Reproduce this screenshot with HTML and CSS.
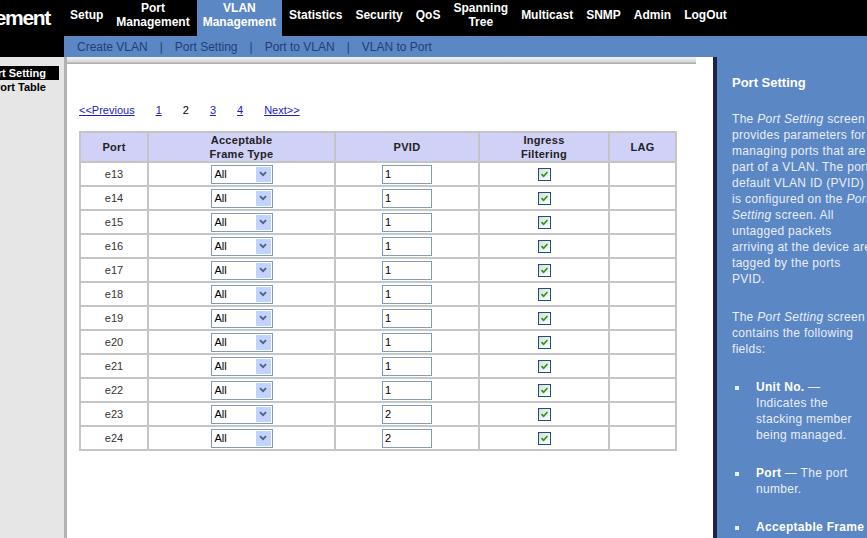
FILE: index.html
```html
<!DOCTYPE html>
<html lang="en">
<head>
    <meta charset="UTF-8">
    <title>VLAN Management - Port Setting</title>
    <link rel="stylesheet" href="styles.css">
</head>
<body>

    <div class="header">
        <div class="brand"><span>Management</span></div>
        <div class="menus">
            <div class="nav">
                <a>Setup</a>
                <a>Port<br>Management</a>
                <a class="active">VLAN<br>Management</a>
                <a>Statistics</a>
                <a>Security</a>
                <a>QoS</a>
                <a>Spanning<br>Tree</a>
                <a>Multicast</a>
                <a>SNMP</a>
                <a>Admin</a>
                <a>LogOut</a>
            </div>
            <div class="subnav">
                <a>Create VLAN</a><span class="sep">|</span>
                <a>Port Setting</a><span class="sep">|</span>
                <a>Port to VLAN</a><span class="sep">|</span>
                <a>VLAN to Port</a>
            </div>
        </div>
    </div>

    <div class="layout">
        <!-- Left menu -->
        <div class="side">
            <a class="current">Port Setting</a>
            <a>Port Table</a>
        </div>

        <!-- Main content -->
        <div class="main">
            <div class="topline"></div>
            <div class="content">
                <div class="pager">
                    <a href="#">&lt;&lt;Previous</a>
                    <a href="#">1</a>
                    <span>2</span>
                    <a href="#">3</a>
                    <a href="#">4</a>
                    <a href="#">Next&gt;&gt;</a>
                </div>

                <table class="grid">
                    <colgroup>
                        <col class="c-port"><col class="c-frame"><col class="c-pvid"><col class="c-ingress"><col class="c-lag">
                    </colgroup>
                    <thead>
                        <tr>
                            <th>Port</th>
                            <th>Acceptable<br>Frame Type</th>
                            <th>PVID</th>
                            <th>Ingress<br>Filtering</th>
                            <th>LAG</th>
                        </tr>
                    </thead>
                    <tbody>
                        <tr><td>e13</td><td><span class="sel"><span class="sel-val">All</span><span class="sel-btn"><svg width="8" height="6" viewBox="0 0 8 6"><path d="M1 1.2 L4 4.2 L7 1.2" fill="none" stroke="#4d6185" stroke-width="1.8"/></svg></span></span></td><td><input class="pvid" type="text" value="1"></td><td><span class="chk"><svg width="9" height="9" viewBox="0 0 9 9"><path d="M1.5 4.2 L3.5 6.3 L7.5 2" fill="none" stroke="#21a121" stroke-width="1.8"/></svg></span></td><td></td></tr>
                        <tr><td>e14</td><td><span class="sel"><span class="sel-val">All</span><span class="sel-btn"><svg width="8" height="6" viewBox="0 0 8 6"><path d="M1 1.2 L4 4.2 L7 1.2" fill="none" stroke="#4d6185" stroke-width="1.8"/></svg></span></span></td><td><input class="pvid" type="text" value="1"></td><td><span class="chk"><svg width="9" height="9" viewBox="0 0 9 9"><path d="M1.5 4.2 L3.5 6.3 L7.5 2" fill="none" stroke="#21a121" stroke-width="1.8"/></svg></span></td><td></td></tr>
                        <tr><td>e15</td><td><span class="sel"><span class="sel-val">All</span><span class="sel-btn"><svg width="8" height="6" viewBox="0 0 8 6"><path d="M1 1.2 L4 4.2 L7 1.2" fill="none" stroke="#4d6185" stroke-width="1.8"/></svg></span></span></td><td><input class="pvid" type="text" value="1"></td><td><span class="chk"><svg width="9" height="9" viewBox="0 0 9 9"><path d="M1.5 4.2 L3.5 6.3 L7.5 2" fill="none" stroke="#21a121" stroke-width="1.8"/></svg></span></td><td></td></tr>
                        <tr><td>e16</td><td><span class="sel"><span class="sel-val">All</span><span class="sel-btn"><svg width="8" height="6" viewBox="0 0 8 6"><path d="M1 1.2 L4 4.2 L7 1.2" fill="none" stroke="#4d6185" stroke-width="1.8"/></svg></span></span></td><td><input class="pvid" type="text" value="1"></td><td><span class="chk"><svg width="9" height="9" viewBox="0 0 9 9"><path d="M1.5 4.2 L3.5 6.3 L7.5 2" fill="none" stroke="#21a121" stroke-width="1.8"/></svg></span></td><td></td></tr>
                        <tr><td>e17</td><td><span class="sel"><span class="sel-val">All</span><span class="sel-btn"><svg width="8" height="6" viewBox="0 0 8 6"><path d="M1 1.2 L4 4.2 L7 1.2" fill="none" stroke="#4d6185" stroke-width="1.8"/></svg></span></span></td><td><input class="pvid" type="text" value="1"></td><td><span class="chk"><svg width="9" height="9" viewBox="0 0 9 9"><path d="M1.5 4.2 L3.5 6.3 L7.5 2" fill="none" stroke="#21a121" stroke-width="1.8"/></svg></span></td><td></td></tr>
                        <tr><td>e18</td><td><span class="sel"><span class="sel-val">All</span><span class="sel-btn"><svg width="8" height="6" viewBox="0 0 8 6"><path d="M1 1.2 L4 4.2 L7 1.2" fill="none" stroke="#4d6185" stroke-width="1.8"/></svg></span></span></td><td><input class="pvid" type="text" value="1"></td><td><span class="chk"><svg width="9" height="9" viewBox="0 0 9 9"><path d="M1.5 4.2 L3.5 6.3 L7.5 2" fill="none" stroke="#21a121" stroke-width="1.8"/></svg></span></td><td></td></tr>
                        <tr><td>e19</td><td><span class="sel"><span class="sel-val">All</span><span class="sel-btn"><svg width="8" height="6" viewBox="0 0 8 6"><path d="M1 1.2 L4 4.2 L7 1.2" fill="none" stroke="#4d6185" stroke-width="1.8"/></svg></span></span></td><td><input class="pvid" type="text" value="1"></td><td><span class="chk"><svg width="9" height="9" viewBox="0 0 9 9"><path d="M1.5 4.2 L3.5 6.3 L7.5 2" fill="none" stroke="#21a121" stroke-width="1.8"/></svg></span></td><td></td></tr>
                        <tr><td>e20</td><td><span class="sel"><span class="sel-val">All</span><span class="sel-btn"><svg width="8" height="6" viewBox="0 0 8 6"><path d="M1 1.2 L4 4.2 L7 1.2" fill="none" stroke="#4d6185" stroke-width="1.8"/></svg></span></span></td><td><input class="pvid" type="text" value="1"></td><td><span class="chk"><svg width="9" height="9" viewBox="0 0 9 9"><path d="M1.5 4.2 L3.5 6.3 L7.5 2" fill="none" stroke="#21a121" stroke-width="1.8"/></svg></span></td><td></td></tr>
                        <tr><td>e21</td><td><span class="sel"><span class="sel-val">All</span><span class="sel-btn"><svg width="8" height="6" viewBox="0 0 8 6"><path d="M1 1.2 L4 4.2 L7 1.2" fill="none" stroke="#4d6185" stroke-width="1.8"/></svg></span></span></td><td><input class="pvid" type="text" value="1"></td><td><span class="chk"><svg width="9" height="9" viewBox="0 0 9 9"><path d="M1.5 4.2 L3.5 6.3 L7.5 2" fill="none" stroke="#21a121" stroke-width="1.8"/></svg></span></td><td></td></tr>
                        <tr><td>e22</td><td><span class="sel"><span class="sel-val">All</span><span class="sel-btn"><svg width="8" height="6" viewBox="0 0 8 6"><path d="M1 1.2 L4 4.2 L7 1.2" fill="none" stroke="#4d6185" stroke-width="1.8"/></svg></span></span></td><td><input class="pvid" type="text" value="1"></td><td><span class="chk"><svg width="9" height="9" viewBox="0 0 9 9"><path d="M1.5 4.2 L3.5 6.3 L7.5 2" fill="none" stroke="#21a121" stroke-width="1.8"/></svg></span></td><td></td></tr>
                        <tr><td>e23</td><td><span class="sel"><span class="sel-val">All</span><span class="sel-btn"><svg width="8" height="6" viewBox="0 0 8 6"><path d="M1 1.2 L4 4.2 L7 1.2" fill="none" stroke="#4d6185" stroke-width="1.8"/></svg></span></span></td><td><input class="pvid" type="text" value="2"></td><td><span class="chk"><svg width="9" height="9" viewBox="0 0 9 9"><path d="M1.5 4.2 L3.5 6.3 L7.5 2" fill="none" stroke="#21a121" stroke-width="1.8"/></svg></span></td><td></td></tr>
                        <tr><td>e24</td><td><span class="sel"><span class="sel-val">All</span><span class="sel-btn"><svg width="8" height="6" viewBox="0 0 8 6"><path d="M1 1.2 L4 4.2 L7 1.2" fill="none" stroke="#4d6185" stroke-width="1.8"/></svg></span></span></td><td><input class="pvid" type="text" value="2"></td><td><span class="chk"><svg width="9" height="9" viewBox="0 0 9 9"><path d="M1.5 4.2 L3.5 6.3 L7.5 2" fill="none" stroke="#21a121" stroke-width="1.8"/></svg></span></td><td></td></tr>
                    </tbody>
                </table>
            </div>
        </div>

        <!-- Help panel -->
        <div class="help">
            <h2>Port Setting</h2>
            <p>The <i>Port Setting</i> screen<br>
               provides parameters for<br>
               managing ports that are<br>
               part of a VLAN. The port<br>
               default VLAN ID (PVID)<br>
               is configured on the <i>Port</i><br>
               <i>Setting</i> screen. All<br>
               untagged packets<br>
               arriving at the device are<br>
               tagged by the ports<br>
               PVID.</p>
            <p>The <i>Port Setting</i> screen<br>
               contains the following<br>
               fields:</p>
            <ul>
                <li><b>Unit No.</b> &mdash;<br>Indicates the<br>stacking member<br>being managed.</li>
                <li><b>Port</b> &mdash; The port<br>number.</li>
                <li><b>Acceptable Frame</b><br>Type &mdash; Packet type</li>
            </ul>
        </div>
    </div>

</body>
</html>
```

FILE: styles.css
```css
body {
    margin: 0;
    font-family: "Liberation Sans", Arial, sans-serif;
    background-color: #e6e6e6;
    overflow: hidden;
}

/* header */
.header {
    display: flex;
    height: 57px;
}

.brand {
    width: 64px;
    flex: none;
    box-sizing: border-box;
    padding-right: 14px;
    background-color: #000;
    color: #fff;
    display: flex;
    justify-content: flex-end;
    overflow: hidden;
}

.brand span {
    font-size: 21px;
    font-weight: bold;
    letter-spacing: -1.3px;
    line-height: 24px;
    margin-top: 6px;
    white-space: nowrap;
}

.menus {
    flex: 1;
    display: flex;
    flex-direction: column;
}

.nav {
    height: 36px;
    background-color: #000;
    display: flex;
    gap: 1px;
}

.nav a {
    display: flex;
    align-items: center;
    height: 29px;
    padding: 0 6px 7px;
    color: #fff;
    font-size: 12px;
    font-weight: bold;
    line-height: 14px;
    text-align: center;
}

.nav a.active {
    background-color: #5b87c5;
}

.subnav {
    height: 21px;
    background-color: #5b87c5;
    display: flex;
    align-items: center;
    padding-left: 13px;
    font-size: 12px;
    color: #213f77;
}

.subnav .sep {
    margin: 0 12px;
}

/* body */
.layout {
    display: flex;
    height: calc(100vh - 57px);
}

.side {
    width: 64px;
    flex: none;
    padding-top: 9px;
    box-sizing: border-box;
}

.side a {
    display: flex;
    justify-content: flex-end;
    width: 59px;
    height: 14px;
    line-height: 14px;
    padding-right: 13px;
    box-sizing: border-box;
    overflow: hidden;
    white-space: nowrap;
    font-size: 11px;
    font-weight: bold;
    color: #000;
}

.side a.current {
    background-color: #000;
    color: #fff;
}

.main {
    flex: 1;
    background-color: #fff;
    border-left: 3px solid #b2b2b2;
}

.topline {
    height: 7px;
    margin-right: 17px;
    background: linear-gradient(#f3f3f3, #dddddd 60%, #a4a4a4);
}

.content {
    padding-left: 12px;
}

.pager {
    display: flex;
    gap: 21px;
    margin-top: 39px;
    font-size: 11px;
    line-height: 14px;
}

.pager a {
    color: #2020c8;
}

.grid {
    margin-top: 14px;
    width: 598px;
    border-collapse: collapse;
    font-size: 11px;
}

.c-port { width: 68px; }
.c-frame { width: 187px; }
.c-pvid { width: 144px; }
.c-ingress { width: 130px; }
.c-lag { width: 67px; }

.grid th,
.grid td {
    border: 2px solid #c5c5c5;
    text-align: center;
    padding: 0;
}

.grid th {
    height: 28px;
    background-color: #cfd1f6;
    color: #222;
    line-height: 14px;
    letter-spacing: 0.3px;
}

.grid td {
    height: 22px;
    color: #333;
}

.sel {
    display: inline-flex;
    align-items: center;
    justify-content: space-between;
    width: 62px;
    height: 19px;
    box-sizing: border-box;
    padding: 1px;
    border: 1px solid #7f9db9;
    background-color: #fff;
    vertical-align: middle;
    text-align: left;
}

.sel-val {
    padding-left: 2px;
    color: #000;
}

.sel-btn {
    display: flex;
    align-items: center;
    justify-content: center;
    width: 15px;
    height: 15px;
    background-color: #c2d3fc;
}

.pvid {
    width: 50px;
    height: 19px;
    box-sizing: border-box;
    margin: 0;
    padding: 0 2px;
    border: 1px solid #7f9db9;
    font: 11px "Liberation Sans", Arial, sans-serif;
    color: #000;
    vertical-align: middle;
}

.chk {
    display: inline-flex;
    align-items: center;
    justify-content: center;
    width: 13px;
    height: 13px;
    box-sizing: border-box;
    border: 1px solid #1c5180;
    background: linear-gradient(135deg, #dcdcd7, #fff);
    vertical-align: middle;
}

/* help */
.help {
    width: 154px;
    flex: none;
    box-sizing: border-box;
    padding: 18px 0 0 15px;
    background-color: #5b87c5;
    border-left: 4px solid #1b2440;
    overflow: hidden;
    color: #e9eef8;
    font-size: 12px;
    line-height: 16px;
    letter-spacing: 0.3px;
    white-space: nowrap;
}

.help h2 {
    margin: 0 0 20px;
    font-size: 13px;
    line-height: 16px;
    color: #fff;
    letter-spacing: 0;
}

.help p {
    margin: 0 0 22px;
}

.help ul {
    margin: 0;
    padding: 0;
    list-style: none;
}

.help li {
    margin-bottom: 22px;
    padding-left: 24px;
}

.help li::before {
    content: "";
    display: inline-block;
    width: 4px;
    height: 4px;
    margin-left: -21px;
    margin-right: 17px;
    vertical-align: middle;
    background-color: #e9eef8;
}

.help b {
    color: #fff;
}
```
